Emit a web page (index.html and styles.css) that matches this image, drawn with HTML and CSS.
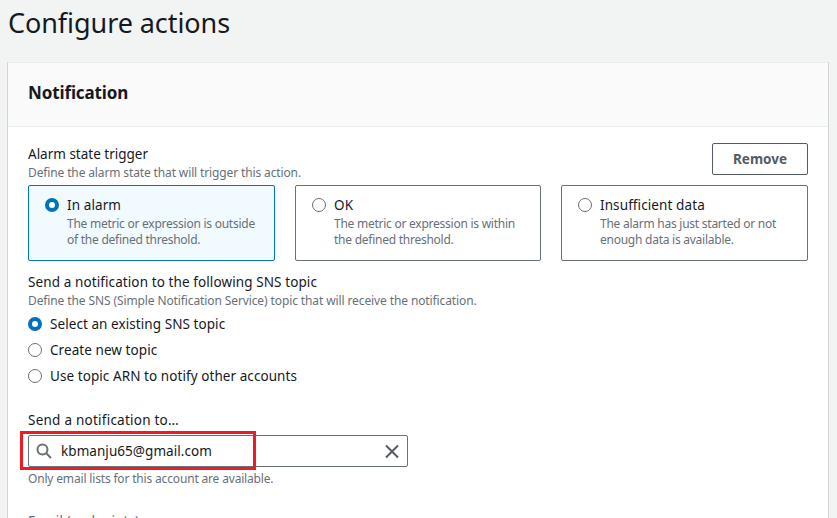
FILE: index.html
```html
<!DOCTYPE html>
<html lang="en">
<head>
<meta charset="utf-8">
<title>Configure actions</title>
<link rel="stylesheet" href="styles.css">
</head>
<body>
<h1>Configure actions</h1>
<section class="panel">
  <header class="panel-header"><h2>Notification</h2></header>
  <div class="panel-body">
    <div class="trigger-head">
      <div>
        <div class="label trigger-label">Alarm state trigger</div>
        <div class="hint">Define the alarm state that will trigger this action.</div>
      </div>
      <button class="remove">Remove</button>
    </div>
    <div class="tiles">
      <label class="tile selected"><i class="radio on"></i><span class="tile-text"><span class="label">In alarm</span><span class="hint">The metric or expression is outside<br>of the defined threshold.</span></span></label>
      <label class="tile"><i class="radio"></i><span class="tile-text"><span class="label">OK</span><span class="hint">The metric or expression is within<br>the defined threshold.</span></span></label>
      <label class="tile"><i class="radio"></i><span class="tile-text"><span class="label">Insufficient data</span><span class="hint">The alarm has just started or not<br>enough data is available.</span></span></label>
    </div>
    <div class="topic">
      <div class="label">Send a notification to the following SNS topic</div>
      <div class="hint">Define the SNS (Simple Notification Service) topic that will receive the notification.</div>
      <label class="option"><i class="radio on"></i><span class="label">Select an existing SNS topic</span></label>
      <label class="option"><i class="radio"></i><span class="label">Create new topic</span></label>
      <label class="option"><i class="radio"></i><span class="label">Use topic ARN to notify other accounts</span></label>
    </div>
    <div class="recipient">
      <div class="label recipient-label">Send a notification to…</div>
      <div class="search">
        <svg class="magnifier" width="16" height="16" viewBox="0 0 16 16"><circle cx="6.5" cy="6.5" r="5" /><path d="M10 10l5 5"/></svg>
        <span class="label value">kbmanju65@gmail.com</span>
        <svg class="clear" width="16" height="16" viewBox="0 0 16 16"><path d="M2 2.5l12 12M14 2.5L2 14.5"/></svg>
        <div class="highlight"></div>
      </div>
      <div class="hint">Only email lists for this account are available.</div>
    </div>
    <div class="label endpoints">Email (endpoints)</div>
  </div>
</section>
</body>
</html>
```
FILE: styles.css
```css
* { box-sizing: border-box; }
body {
  margin: 0;
  height: 518px;
  overflow: hidden;
  background: #f2f3f3;
  color: #16191f;
  font-family: "Noto Sans", sans-serif;
}
h1 {
  margin: 0;
  height: 62px;
  padding: 5px 0 0 8px;
  font-size: 27px;
  line-height: 36px;
  font-weight: 400;
  letter-spacing: -0.07px;
}
.panel {
  width: 822px;
  height: 456px;
  overflow: hidden;
  margin-left: 7px;
  background: #fff;
  border: 1px solid #d0d4d4;
  border-bottom: 0;
  border-top-color: #eaeded;
}
.panel-header {
  height: 64px;
  padding: 19px 20px 0;
  background: #fafafa;
  border-bottom: 1px solid #eaeded;
}
h2 { margin: 0; font-size: 17px; line-height: 22px; font-weight: 700; letter-spacing: -0.12px; }
.panel-body { padding: 16px 20px 0; }
.label { display: block; font-size: 13.5px; line-height: 22px; white-space: nowrap; letter-spacing: 0.1px; }
.trigger-label { letter-spacing: 0; }
.recipient-label { letter-spacing: 0.24px; }
.hint { display: block; font-size: 12px; line-height: 16px; color: #687078; white-space: nowrap; letter-spacing: -0.13px; }
.trigger-head { display: flex; justify-content: space-between; height: 42px; }
.remove {
  width: 96px;
  height: 32px;
  padding: 0;
  background: #fff;
  border: 1px solid #545b64;
  border-radius: 2px;
  color: #545b64;
  font: 700 13.5px/20px "Noto Sans", sans-serif;
}
.tiles { display: grid; grid-template-columns: 247px 246px 247px; gap: 20px; }
.tile {
  display: flex;
  gap: 8px;
  height: 76px;
  padding: 8px 0 8px 16px;
  border: 1px solid #687078;
  border-radius: 2px;
}
.tile .hint { letter-spacing: -0.25px; }
.selected { background: #f1faff; border-color: #0073bb; }
.radio {
  flex: none;
  width: 14px;
  height: 14px;
  margin-top: 4px;
  background: #fff;
  border: 1px solid #687078;
  border-radius: 50%;
}
.on { border: 4px solid #0073bb; }
.topic { margin-top: 10px; }
.topic .hint { letter-spacing: -0.11px; }
.option { display: flex; gap: 8px; height: 22px; margin-top: 4px; }
.option .label { letter-spacing: 0.07px; }
.recipient { margin-top: 22px; }
.recipient .hint { letter-spacing: -0.17px; }
.search {
  position: relative;
  display: flex;
  align-items: center;
  width: 380px;
  height: 32px;
  margin: 4px 0;
  padding: 0 7px;
  border: 1px solid #687078;
  border-radius: 2px;
}
.search svg { fill: none; stroke: #687078; stroke-width: 2; }
.search .clear { margin-left: auto; stroke: #545b64; }
.value { margin-left: 9px; letter-spacing: 0.06px; }
.highlight {
  position: absolute;
  left: -9px;
  top: -5px;
  width: 236px;
  height: 39px;
  border: 3px solid #ed1c24;
}
.endpoints { margin-top: 23px; color: #687078; letter-spacing: 0.05px; }
```
